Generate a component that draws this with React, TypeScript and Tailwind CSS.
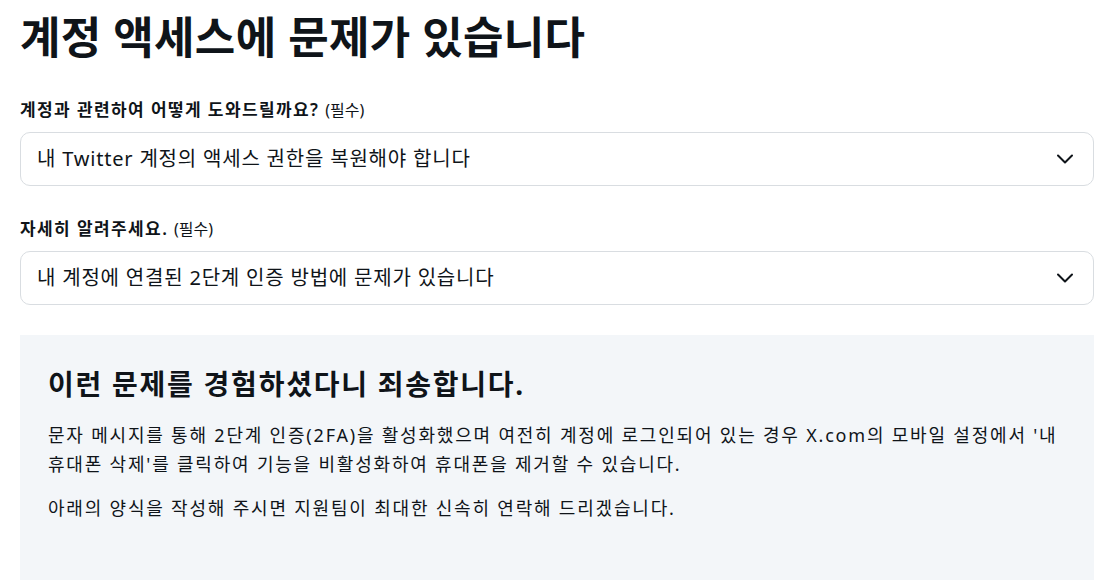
import React from 'react'

function Chevron() {
  return (
    <svg width="16" height="16" viewBox="0 0 16 16" fill="none" className="shrink-0">
      <path d="M1 4.5 L8 11.5 L15 4.5" stroke="#0f1419" strokeWidth="2" strokeLinecap="round" strokeLinejoin="round" />
    </svg>
  )
}

function SelectField({ label, value }: { label: string; value: string }) {
  return (
    <div>
      <p className="text-[17px] font-semibold leading-6 tracking-[1.4px] text-[#0f1419]">
        {label} <span className="text-[16px] font-normal tracking-normal">(필수)</span>
      </p>
      <div className="mt-[10px] flex h-[54px] items-center justify-between rounded-[10px] border border-[#d9dde1] bg-white pl-4 pr-[20px]">
        <span className="text-[20px] tracking-[0.8px] text-[#0f1419]">{value}</span>
        <Chevron />
      </div>
    </div>
  )
}

export default function App() {
  return (
    <div
      className="min-h-[580px] overflow-hidden bg-white px-5 pt-[9px]"
      style={{ fontFamily: '"Noto Sans", "Noto Sans CJK KR", sans-serif' }}
    >
      <h1 className="text-[44px] font-bold leading-[56px] tracking-[0.3px] text-[#0f1419]">
        계정 액세스에 문제가 있습니다
      </h1>
      <div className="mt-[33px] flex flex-col gap-[31px]">
        <SelectField label="계정과 관련하여 어떻게 도와드릴까요?" value="내 Twitter 계정의 액세스 권한을 복원해야 합니다" />
        <SelectField label="자세히 알려주세요." value="내 계정에 연결된 2단계 인증 방법에 문제가 있습니다" />
      </div>
      <div className="mt-[30px] h-[260px] bg-[#f3f6f9] px-7 pt-[29px]">
        <h2 className="text-[28px] font-bold leading-10 tracking-[1.75px] text-[#0f1419]">
          이런 문제를 경험하셨다니 죄송합니다.
        </h2>
        <p className="mt-[17px] text-[18px] leading-[29px] tracking-[1.8px] text-[#0f1419]">
          문자 메시지를 통해 2단계 인증(2FA)을 활성화했으며 여전히 계정에 로그인되어 있는 경우 X.com의 모바일 설정에서 '내
          휴대폰 삭제'를 클릭하여 기능을 비활성화하여 휴대폰을 제거할 수 있습니다.
        </p>
        <p className="mt-[15px] text-[18px] leading-[29px] tracking-[1.8px] text-[#0f1419]">
          아래의 양식을 작성해 주시면 지원팀이 최대한 신속히 연락해 드리겠습니다.
        </p>
      </div>
    </div>
  )
}
